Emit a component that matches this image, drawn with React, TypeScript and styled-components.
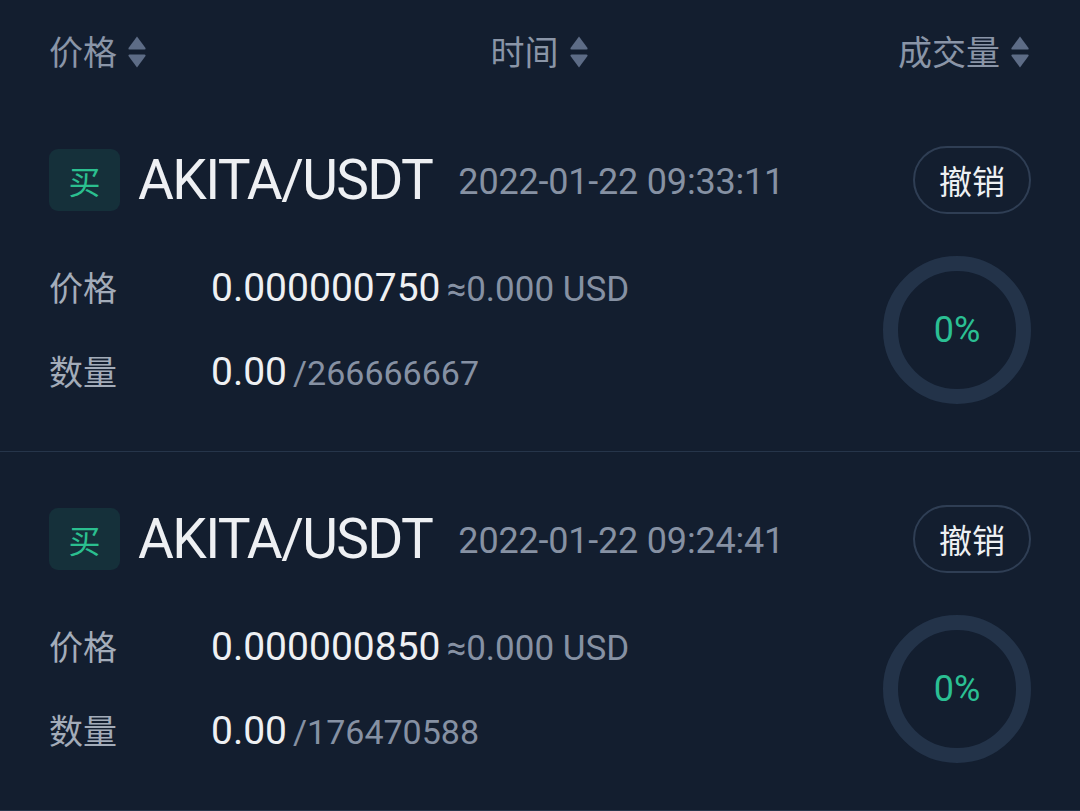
import React from "react";
import styled, { createGlobalStyle } from "styled-components";

// Données des ordres en cours
const orders = [
  {
    id: 1,
    side: "买",
    pair: "AKITA/USDT",
    time: "2022-01-22 09:33:11",
    price: "0.000000750",
    approx: "≈0.000 USD",
    filled: "0.00",
    total: "/266666667",
    percent: 0,
  },
  {
    id: 2,
    side: "买",
    pair: "AKITA/USDT",
    time: "2022-01-22 09:24:41",
    price: "0.000000850",
    approx: "≈0.000 USD",
    filled: "0.00",
    total: "/176470588",
    percent: 0,
  },
];

const NUM = `"Roboto", "Noto Sans CJK SC", sans-serif`;
const CJK = `"Noto Sans CJK SC", "Noto Sans", sans-serif`;

const GlobalStyle = createGlobalStyle`
  html, body {
    margin: 0;
    padding: 0;
    background: #131e2f;
  }
  body {
    font-family: ${CJK};
  }
`;

const SortIcon: React.FC = () => (
  <svg width="20" height="34" viewBox="0 0 20 34">
    <path d="M10 1.5 L18.5 13 Q19 14.5 17.5 14.5 L2.5 14.5 Q1 14.5 1.5 13 Z" fill="#5d6c86" />
    <path d="M10 32.5 L18.5 21 Q19 19.5 17.5 19.5 L2.5 19.5 Q1 19.5 1.5 21 Z" fill="#5d6c86" />
  </svg>
);

const Ring: React.FC<{ percent: number }> = ({ percent }) => {
  const r = 66.5;
  const c = 2 * Math.PI * r;
  return (
    <RingBox>
      <svg width="148" height="148" viewBox="0 0 148 148">
        <circle cx="74" cy="74" r={r} fill="none" stroke="#233349" strokeWidth="15" />
        {percent > 0 && (
          <circle
            cx="74"
            cy="74"
            r={r}
            fill="none"
            stroke="#2bbf93"
            strokeWidth="15"
            strokeDasharray={`${(c * percent) / 100} ${c}`}
            transform="rotate(-90 74 74)"
          />
        )}
      </svg>
      <RingLabel>{percent}%</RingLabel>
    </RingBox>
  );
};

const App: React.FC = () => {
  return (
    <Page>
      <GlobalStyle />
      <Header>
        <SortHead $align="start">
          价格
          <SortIcon />
        </SortHead>
        <SortHead $align="center">
          时间
          <SortIcon />
        </SortHead>
        <SortHead $align="end">
          成交量
          <SortIcon />
        </SortHead>
      </Header>
      {orders.map((o) => (
        <Card key={o.id}>
          <TopRow>
            <SideBadge>{o.side}</SideBadge>
            <Pair>{o.pair}</Pair>
            <Time>{o.time}</Time>
            <CancelButton>撤销</CancelButton>
          </TopRow>
          <Body>
            <Fields>
              <FieldRow>
                <Label>价格</Label>
                <Value>{o.price}</Value>
                <SubValue $size={35}>{o.approx}</SubValue>
              </FieldRow>
              <FieldRow>
                <Label>数量</Label>
                <Value>{o.filled}</Value>
                <SubValue $size={34}>{o.total}</SubValue>
              </FieldRow>
            </Fields>
            <Ring percent={o.percent} />
          </Body>
        </Card>
      ))}
    </Page>
  );
};

// Styles
const Page = styled.div`
  width: 1080px;
  min-height: 811px;
  background: #131e2f;
  overflow: hidden;
`;

const Header = styled.div`
  display: grid;
  grid-template-columns: 1fr auto 1fr;
  align-items: center;
  height: 93px;
  box-sizing: border-box;
  padding: 8px 50px 0 49px;
`;

const SortHead = styled.div<{ $align: "start" | "center" | "end" }>`
  justify-self: ${(p) => p.$align};
  display: flex;
  align-items: center;
  gap: 10px;
  font-family: ${CJK};
  font-size: 34px;
  line-height: 42px;
  color: #8a95a7;
  svg {
    margin-top: 2px;
  }
`;

const Card = styled.div`
  height: 359px;
  box-sizing: border-box;
  padding: 53px 49px 0 49px;
  border-bottom: 1px solid #26354a;
`;

const TopRow = styled.div`
  display: flex;
  align-items: center;
  height: 68px;
`;

const SideBadge = styled.div`
  width: 71px;
  height: 62px;
  border-radius: 9px;
  background: #15303a;
  color: #2bbf8f;
  font-family: ${CJK};
  font-size: 32px;
  display: flex;
  align-items: center;
  justify-content: center;
  flex-shrink: 0;
`;

const Pair = styled.div`
  margin-left: 18px;
  font-family: ${NUM};
  font-size: 55px;
  letter-spacing: -1.6px;
  color: #eef0f3;
  line-height: 68px;
`;

const Time = styled.div`
  margin-left: 26px;
  font-family: ${NUM};
  font-size: 36px;
  letter-spacing: -0.2px;
  color: #8691a3;
  margin-top: 4px;
`;

const CancelButton = styled.button`
  margin-left: auto;
  width: 118px;
  height: 68px;
  border-radius: 34px;
  border: 2px solid #2f3e54;
  background: transparent;
  color: #eef0f3;
  font-family: ${CJK};
  font-size: 33px;
  padding: 0;
  display: flex;
  align-items: center;
  justify-content: center;
`;

const Body = styled.div`
  margin-top: 42px;
  display: flex;
  align-items: center;
  justify-content: space-between;
  height: 148px;
`;

const Fields = styled.div`
  display: flex;
  flex-direction: column;
  gap: 36px;
  margin-top: -3px;
`;

const FieldRow = styled.div`
  display: flex;
  align-items: baseline;
  height: 48px;
  line-height: 48px;
`;

const Label = styled.div`
  width: 162px;
  font-family: ${CJK};
  font-size: 34px;
  color: #a3acb9;
`;

const Value = styled.div`
  font-family: ${NUM};
  font-size: 39px;
  color: #eef0f3;
`;

const SubValue = styled.div<{ $size: number }>`
  margin-left: 6px;
  font-family: ${NUM};
  font-size: ${(p) => p.$size}px;
  color: #8691a3;
`;

const RingBox = styled.div`
  position: relative;
  width: 148px;
  height: 148px;
  flex-shrink: 0;
  svg {
    display: block;
  }
`;

const RingLabel = styled.div`
  position: absolute;
  inset: 0;
  display: flex;
  align-items: center;
  justify-content: center;
  font-family: ${NUM};
  font-size: 36px;
  color: #2bbf93;
`;

export default App;
